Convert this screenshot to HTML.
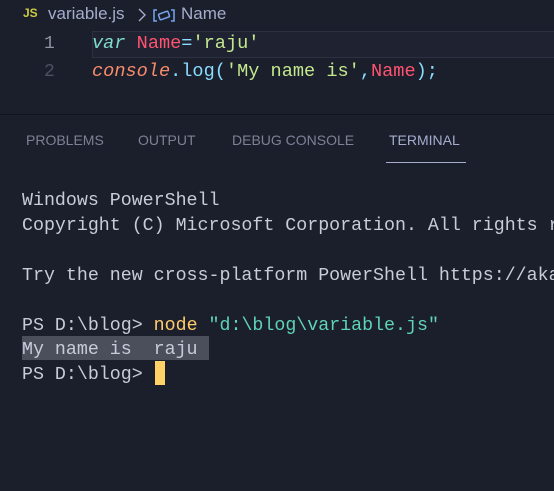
<!DOCTYPE html>
<html><head><style>
body{margin:0;width:554px;height:491px;background:#1b1e2b;overflow:hidden;position:relative;font-family:"Liberation Sans",sans-serif}
.a{position:absolute;white-space:pre}
.m{font-family:"Liberation Mono",monospace}
</style></head><body>
<div class="a" style="left:23px;top:6px;font-size:12px;font-weight:bold;color:#cbcb41">JS</div>
<div class="a" style="left:48px;top:4px;font-size:17px;color:#a6accd">variable.js</div>
<svg class="a" style="left:137px;top:8px" width="10" height="14"><path d="M2 1 L8 7 L2 13" stroke="#a6accd" stroke-width="1.4" fill="none"/></svg>
<svg class="a" style="left:153px;top:9px" width="22" height="13"><path d="M4 1H1V12H4M18 1H21V12H18" stroke="#75a7f0" stroke-width="1.5" fill="none"/><rect x="6" y="3.5" width="10" height="6" rx="1" transform="rotate(-20 11 6.5)" stroke="#75a7f0" stroke-width="1.5" fill="none"/></svg>
<div class="a" style="left:181px;top:4px;font-size:17px;color:#a6accd">Name</div>
<div class="a" style="left:92px;top:31px;width:470px;height:25px;border:1px solid #2c3040;background:#1e2231"></div>
<div class="a m" style="left:44px;top:32px;font-size:18px;color:#8f93a2;line-height:24px">1</div>
<div class="a m" style="left:44px;top:60px;font-size:18px;color:#4b5163;line-height:24px">2</div>
<div class="a m" style="left:92px;top:32px;font-size:18.6px;line-height:24px;color:#89ddff"><i style="color:#7fdbca">var</i> <span style="color:#ff5370">Name</span>=<span style="color:#c3e88d">'raju'</span></div>
<div class="a m" style="left:92px;top:60px;font-size:18.6px;line-height:24px;color:#89ddff"><i style="color:#f78c6c">console</i>.log(<span style="color:#c3e88d">'My name is'</span>,<span style="color:#ff5370">Name</span>);</div>
<div class="a" style="left:0;top:114px;width:554px;height:1px;background:#11131c"></div>
<div class="a" style="left:26px;top:132px;font-size:14px;color:#7c8196">PROBLEMS</div>
<div class="a" style="left:138px;top:132px;font-size:14px;color:#7c8196">OUTPUT</div>
<div class="a" style="left:232px;top:132px;font-size:14px;color:#7c8196">DEBUG CONSOLE</div>
<div class="a" style="left:389px;top:132px;font-size:14px;color:#a6accd">TERMINAL</div>
<div class="a" style="left:386px;top:162px;width:80px;height:1px;background:#a6accd"></div>
<div class="a" style="left:22px;top:336px;width:187px;height:24px;background:#4b4f5c"></div>
<div class="a" style="left:155px;top:361px;width:10px;height:24px;background:#ffd166"></div>
<div class="a m" style="left:22px;top:189px;width:532px;overflow:hidden;font-size:18.3px;line-height:24.9px;color:#c8cbd8">Windows PowerShell
Copyright (C) Microsoft Corporation. All rights reserved.

Try the new cross-platform PowerShell https://aka.ms/pscore6

PS D:\blog&gt; <span style="color:#ffcb6b">node</span> <span style="color:#5fd4b5">"d:\blog\variable.js"</span>
My name is  raju
PS D:\blog&gt; </div>
</body></html>
